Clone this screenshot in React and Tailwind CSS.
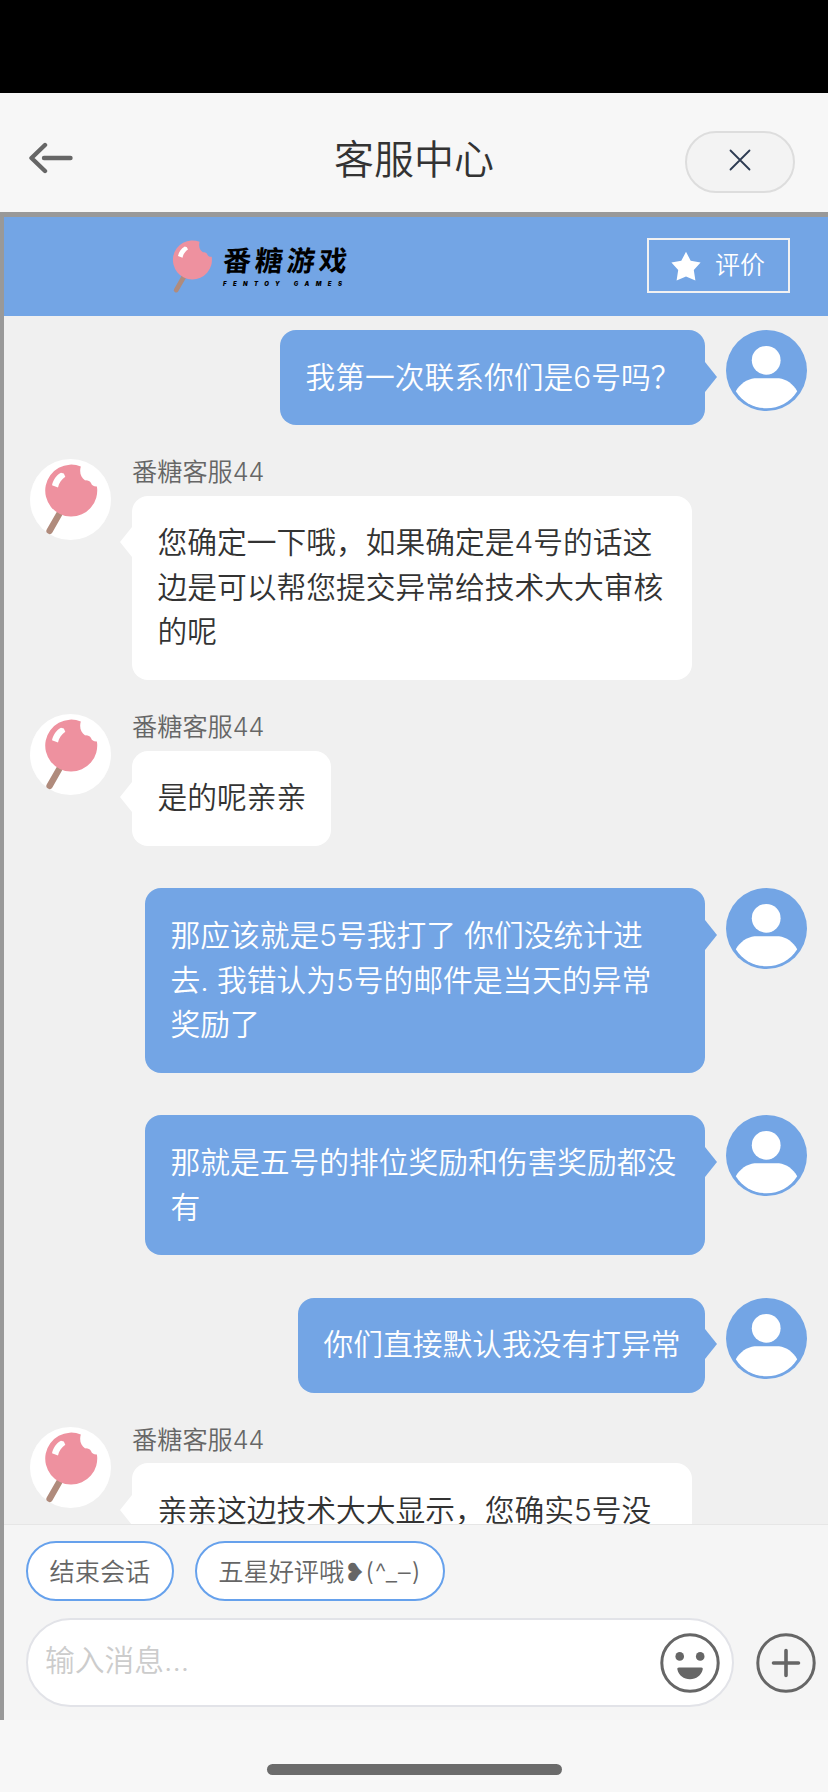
import React from 'react';

const messages = [
  { from: 'user', lines: ['我第一次联系你们是6号吗？'], className: 'w-[425px]' },
  {
    from: 'agent',
    lines: ['您确定一下哦，如果确定是4号的话这', '边是可以帮您提交异常给技术大大审核', '的呢'],
    className: 'w-[560px]',
  },
  { from: 'agent', lines: ['是的呢亲亲'], className: 'w-[199px]' },
  {
    from: 'user',
    lines: ['那应该就是5号我打了 你们没统计进', '去. 我错认为5号的邮件是当天的异常', '奖励了'],
    className: 'w-[560px]',
  },
  { from: 'user', lines: ['那就是五号的排位奖励和伤害奖励都没', '有'], className: 'w-[560px]' },
  { from: 'user', lines: ['你们直接默认我没有打异常'], className: 'w-[407px]' },
  { from: 'agent', lines: ['亲亲这边技术大大显示，您确实5号没'], className: 'w-[560px]' },
];

const quickReplies = [
  { text: '结束会话' },
  { text: '五星好评哦❥', face: '(^_–)' },
];

function Lollipop({ className }) {
  return (
    <svg viewBox="15 5 54 72" className={className}>
      <path d="M29.8 54 19.6 71.8" stroke="#b08b7c" strokeWidth="6.4" strokeLinecap="round" />
      <path
        d="M50.8 7.4C49.2 13 50.6 18.6 55.2 21.4C57.6 21.2 60 22 61 24C61.6 26.4 64 27.6 66.9 27.4A26 26 0 1 1 50.8 7.4Z"
        fill="#ee919f"
      />
      <path d="M31 13.7 33.8 14.6 35.3 17.7C31.4 20.4 29 24 28 28.5L22 26.2C23.2 20.8 26 16.4 31 13.7Z" fill="#fff" />
    </svg>
  );
}

function UserAvatar() {
  return (
    <svg viewBox="0 0 81 81" className="w-[81px] h-[81px] shrink-0">
      <circle cx="40.5" cy="40.5" r="40.5" fill="#73a5e5" />
      <circle cx="40.2" cy="30.3" r="14.4" fill="#fff" />
      <path d="M28.5 48.3H53C60.5 49.2 67 54 71.2 61.2C64 72.5 53 78.2 40.6 78.2C28 78.2 17 72.5 9.8 61.2C14 54 20.8 49.2 28.5 48.3Z" fill="#fff" />
    </svg>
  );
}

function AgentAvatar() {
  return (
    <div className="w-[81px] h-[81px] shrink-0 rounded-full bg-white pl-[15px] pt-[5px]">
      <Lollipop className="w-[54px] h-[72px]" />
    </div>
  );
}

function Bubble({ lines, mine, className }) {
  return (
    <div
      className={`relative rounded-2xl px-[25.5px] pt-[24.6px] pb-[26px] text-[29.75px] leading-[44.6px] whitespace-nowrap ${
        mine ? 'bg-[#73a5e5] text-white' : 'bg-white text-[#333]'
      } ${className}`}
    >
      {lines.map((line) => (
        <p key={line}>{line}</p>
      ))}
      <svg
        viewBox="0 0 13 30"
        className={`absolute top-[31.5px] w-[13px] h-[30px] ${mine ? '-right-3' : '-left-3 rotate-180'}`}
      >
        <path d="M0 0H1L13 15L1 30H0Z" fill={mine ? '#73a5e5' : '#fff'} />
      </svg>
    </div>
  );
}

function Message({ from, lines, className }) {
  if (from === 'user') {
    return (
      <div className="flex justify-end gap-[21px] pr-[21px] pt-[42.6px] first:pt-[14px]">
        <Bubble lines={lines} className={className} mine />
        <UserAvatar />
      </div>
    );
  }
  return (
    <div className="flex gap-[21px] pl-[26px] pt-[34px]">
      <AgentAvatar />
      <div>
        <div className="h-[36.5px] text-[25.2px] leading-[26px] text-[#666]">番糖客服44</div>
        <Bubble lines={lines} className={className} />
      </div>
    </div>
  );
}

export default function App() {
  return (
    <div className="w-[828px] h-[1792px] flex flex-col overflow-hidden bg-[#f7f7f7] font-[350] font-['Inter','Noto_Sans_CJK_SC',sans-serif]">
      <div className="h-[93px] shrink-0 bg-black" />

      {/* Title bar */}
      <header className="h-[119px] shrink-0 flex items-center justify-between pl-7 pr-[33px]">
        <svg viewBox="0 0 46 32" className="w-[46px] h-8 mt-2.5" fill="none" stroke="#666" strokeWidth="4.4" strokeLinecap="round" strokeLinejoin="round">
          <path d="M17 3 3.5 16 17 29" />
          <path d="M16 16H42.5" />
        </svg>
        <h1 className="ml-[69px] mt-[14px] text-[40px] leading-[60px] text-[#333]">客服中心</h1>
        <button className="w-[110px] h-[62px] mt-[18px] rounded-full border-2 border-[#ddd] bg-[#f3f3f3] flex items-center justify-center">
          <svg viewBox="0 0 22 22" className="w-[22px] h-[22px] -mt-[3px]" stroke="#2d3b52" strokeWidth="1.8" strokeLinecap="round">
            <path d="M1.5 1.5 20.5 20.5M20.5 1.5 1.5 20.5" />
          </svg>
        </button>
      </header>

      <div className="h-[1508px] shrink-0 flex flex-col border-t-[5px] border-l-4 border-[#999]">
        {/* Brand bar */}
        <div className="h-[99px] shrink-0 bg-[#73a5e5] flex items-center justify-between pl-[168px] pr-[38px]">
          <div className="flex items-center gap-[9px]">
            <Lollipop className="w-[42px] h-[54px]" />
            <div className="mt-px text-black">
              <div className="text-[28px] leading-[30px] font-bold -skew-x-6 tracking-[4px]">番糖游戏</div>
              <div className="mt-1 text-[6px] leading-[8px] font-black italic tracking-[6.4px] whitespace-nowrap">FENTOY GAMES</div>
            </div>
          </div>
          <button className="w-[143px] h-[55px] -mt-0.5 border-2 border-[#f2f2f2] flex items-center pl-[22px] text-white text-[25px]">
            <svg viewBox="0 0 30 30" className="w-[30px] h-[30px]" fill="#fff">
              <path d="M15 .8 19.7 9.8 29.6 11.4 22.8 18.9 24.4 29.4 15 25.4 5.6 29.4 7.2 18.9 .4 11.4 10.3 9.8Z" />
            </svg>
            <span className="ml-3.5">评价</span>
          </button>
        </div>

        {/* Conversation */}
        <main className="flex-1 min-h-0 overflow-hidden bg-[#f0f0f0]">
          {messages.map((m, i) => (
            <Message key={i} {...m} />
          ))}
        </main>

        {/* Quick replies and input */}
        <footer className="h-[196px] shrink-0 border-t border-[#e6e6e6] bg-[#f5f5f5] pl-[22px] pr-3 pt-4">
          <div className="flex gap-[21px]">
            {quickReplies.map(({ text, face }) => (
              <button
                key={text}
                className="h-[60px] pt-[3px] rounded-full border-2 border-[#66a1ec] bg-white px-[21.5px] text-[25.2px] text-[#666] whitespace-nowrap"
              >
                {text}
                {face && <span className="tracking-[1.1px]">{face}</span>}
              </button>
            ))}
          </div>
          <div className="mt-[17px] flex items-center justify-between">
            <div className="w-[708px] h-[89px] rounded-full border-2 border-[#e2e3e8] bg-white flex items-center justify-between pl-[17px] pr-3">
              <span className="-mt-1 text-[29.75px] text-[#ccc]">输入消息...</span>
              <svg viewBox="0 0 60 60" className="w-[60px] h-[60px]" fill="#666">
                <circle cx="30" cy="30" r="28.2" fill="none" stroke="#666" strokeWidth="3" />
                <circle cx="19.7" cy="23.4" r="4.3" />
                <circle cx="40.2" cy="23.4" r="4.3" />
                <path d="M19 34.5H41.2C42.6 34.5 43 35.4 42.7 36.5C41.3 42.5 36.3 46.2 30 46.2S18.7 42.5 17.4 36.5C17.1 35.4 17.6 34.5 19 34.5Z" />
              </svg>
            </div>
            <svg viewBox="0 0 60 60" className="w-[60px] h-[60px]" fill="none" stroke="#666" strokeWidth="3">
              <circle cx="30" cy="30" r="28.2" />
              <path d="M17.5 30H42.5M30 17.5V42.5" strokeWidth="3.6" strokeLinecap="round" />
            </svg>
          </div>
        </footer>
      </div>

      {/* Home indicator */}
      <div className="mt-11 mx-auto w-[295px] h-[11px] shrink-0 rounded-full bg-[#6b6b6b]" />
    </div>
  );
}
